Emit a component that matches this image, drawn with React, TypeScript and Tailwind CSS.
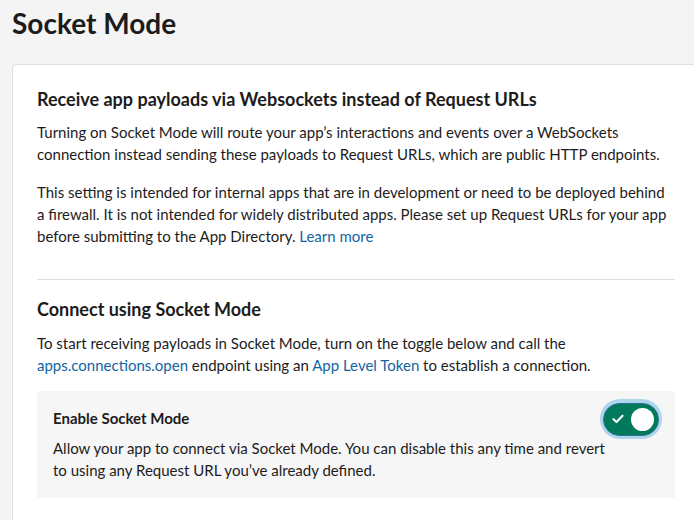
import React from "react";

function Toggle() {
  return (
    <span className="flex h-[40px] w-[62px] shrink-0 items-center justify-center rounded-full bg-[#acd6ec]">
      <span className="flex h-[33px] w-[56px] items-center justify-between rounded-full border border-[#2f6f8f] bg-[#007a5a] pl-[8px] pr-[4px]">
        <svg width="12" height="10" viewBox="0 0 12 10" fill="none">
          <path d="M1.5 5.2 L4.5 8 L10.5 1.8" stroke="#fff" strokeWidth="2.2" strokeLinecap="round" strokeLinejoin="round" />
        </svg>
        <span className="h-[23px] w-[23px] rounded-full bg-white" />
      </span>
    </span>
  );
}

export default function App() {
  return (
    <div
      className="h-[520px] w-[694px] overflow-hidden bg-[#f4f4f4] text-[#1d1c1d]"
      style={{ fontFamily: "Lato, 'Open Sans', sans-serif" }}
    >
      <div className="pl-3 pt-[5px]">
        <h1 className="text-[28px] font-bold leading-[36px]">Socket Mode</h1>

        <div className="mt-[23px] w-[688px] rounded-[4px] border border-[#dedede] bg-white px-6 pt-[22px] pb-8">
          <h2 className="text-[18px] font-bold leading-[24px]">
            Receive app payloads via Websockets instead of Request URLs
          </h2>
          <p className="mt-[10px] text-[15px] leading-[22px]">
            Turning on Socket Mode will route your app’s interactions and events over a WebSockets
            connection instead sending these payloads to Request URLs, which are public HTTP endpoints.
          </p>
          <p className="mt-4 text-[15px] leading-[22px]">
            This setting is intended for internal apps that are in development or need to be deployed behind
            a firewall. It is not intended for widely distributed apps. Please set up Request URLs for your app
            before submitting to the App Directory.{" "}
            <a className="text-[#1264a3]" href="#">Learn more</a>
          </p>

          <div className="mt-8 h-px bg-[#dddddd]" />

          <h2 className="mt-[17px] text-[18px] font-bold leading-[24px]">Connect using Socket Mode</h2>
          <p className="mt-[11px] text-[15px] leading-[22px]">
            To start receiving payloads in Socket Mode, turn on the toggle below and call the{" "}
            <a className="text-[#1264a3]" href="#">apps.connections.open</a> endpoint using an{" "}
            <a className="text-[#1264a3]" href="#">App Level Token</a> to establish a connection.
          </p>

          <div className="mt-[15px] flex items-start justify-between bg-[#f6f6f6] pl-4 pr-[13px] pt-2 pb-[17px]">
            <div className="min-w-0 flex-1 pt-2">
              <div className="text-[15px] font-bold leading-[22px]">Enable Socket Mode</div>
              <p className="mt-2 w-[560px] text-[15px] leading-[22px]">
                Allow your app to connect via Socket Mode. You can disable this any time and revert
                to using any Request URL you’ve already defined.
              </p>
            </div>
            <Toggle />
          </div>
        </div>
      </div>
    </div>
  );
}
